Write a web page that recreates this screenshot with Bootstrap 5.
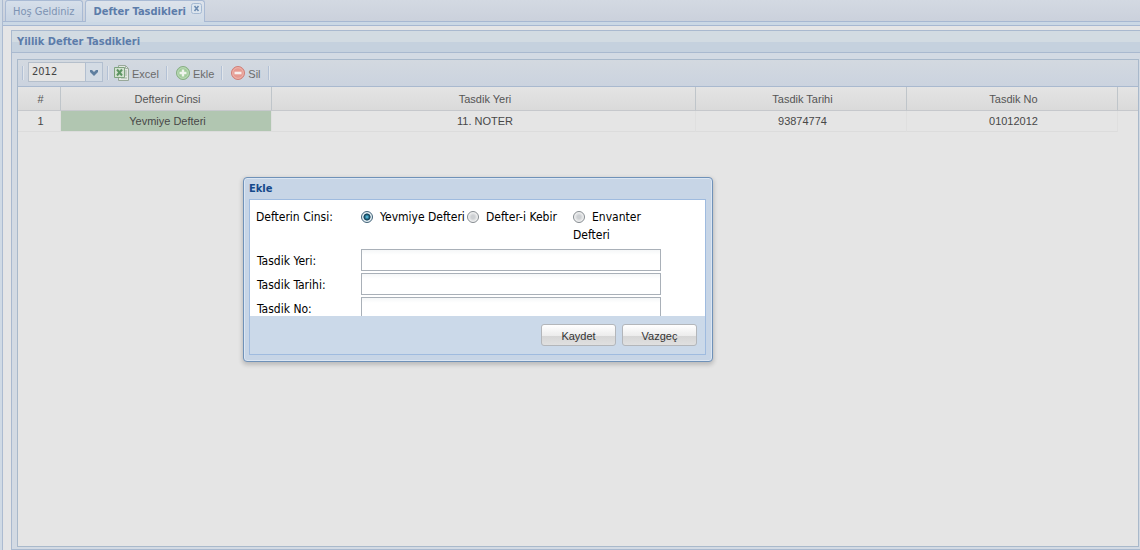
<!DOCTYPE html>
<html lang="tr">
<head>
<meta charset="utf-8">
<meta name="viewport" content="width=device-width, initial-scale=1">
<title>Defter Tasdikleri</title>
<link href="https://cdn.jsdelivr.net/npm/bootstrap@5.3.0/dist/css/bootstrap.min.css" rel="stylesheet">
<style>
  :root { --ui: "DejaVu Sans Condensed", "DejaVu Sans", sans-serif; --data: "Liberation Sans", Arial, sans-serif; }
  body { font: 11px/14px var(--ui); background: #d0dae5; color: #555; }
  .workspace { border-left: 1px solid #acbbd1; margin-left: 2px; }
  .tab-strip { height: 22px; padding-left: 2px; gap: 2px; background: linear-gradient(#d3d9e2, #cbd1dc); border-bottom: 1px solid #a7b8d2; }
  .tab-strip .nav-link { height: 21px; margin: 0; padding: 4px 7px; border: 1px solid #a9bad4; border-bottom: 0; border-radius: 3px 3px 0 0; color: #7d93b3; background: linear-gradient(#d6dfea, #c7d3e2); line-height: 14px; }
  .tab-strip .nav-link.active { height: 22px; color: #5c7caa; font-weight: bold; background: linear-gradient(#dde3eb, #cfdae6); padding: 4px 2px 4px 8px; }
  .tab-close { width: 11px; height: 11px; padding: 0; display: flex; margin: -2px 0 0 5px; }
  .tab-spacer { height: 4px; background: #cbd8e5; border-bottom: 1px solid #a7b8d2; }
  .stage { background: #e5e5e6; padding: 4px 0 0 8px; min-height: 0; }
  .books { border: 1px solid #a9b9cf; border-right: 0; background: #d3dae3; min-height: 0; }
  .books-title { height: 22px; padding: 4px 5px; font-weight: bold; font-size: 11px; color: #5c7caa; background: linear-gradient(#d2dbe2 0 50%, #c5d1de 52% 100%); border-bottom: 1px solid #a9b9cf; margin: 0; line-height: 14px; }
  .books-body { padding: 6px 1px 2px 5px; min-height: 0; }
  .grid-box { border: 1px solid #a9b9cb; background: #e5e5e5; min-height: 0; overflow: hidden; }
  .tools { height: 27px; padding: 0 4px; background: linear-gradient(#d3d9e0, #cbd3df); border-bottom: 1px solid #a9b9cf; font: 11px/14px var(--data); }
  .rule-v { width: 2px; height: 14px; border-left: 1px solid #b3c1d5; border-right: 1px solid #e1e5ea; }
  .tools .rule-gap { margin: 0 7px; }
  .tools button { border: 0; background: none; padding: 0; color: #6b6b6b; display: flex; align-items: center; gap: 2px; height: 20px; }
  .tools button span { padding-top: 2px; }
  .year { position: relative; width: 75px; height: 20px; margin-top: -2px; }
  .year select { appearance: none; width: 100%; height: 100%; border: 1px solid #b5bfcb; background: #e5e5e5; color: #444; font: 11px/14px var(--ui); padding: 0 4px 0 3px; border-radius: 0; }
  .year svg { position: absolute; right: 0; top: 0; pointer-events: none; }
  .ledger { width: 100%; table-layout: fixed; border-collapse: separate; border-spacing: 0; font: 11px/14px var(--data); color: #555; text-align: center; }
  .ledger th { font-weight: normal; height: 24px; padding: 0 0 0 3px; background: linear-gradient(#e4e4e4, #dadada); border-right: 1px solid #bfc5ca; border-bottom: 1px solid #c6c8cc; }
  .ledger th:last-child { border-right: 0; }
  .ledger td { height: 21px; padding: 0 0 0 3px; border-bottom: 1px solid #dcdcdc; border-right: 1px solid #dfdfdf; color: #484848; }
  .ledger td:last-child { border: 0; }
  .ledger .picked { background: #b1c6b1; }
  .dialog { position: absolute; left: 243px; top: 177px; width: 470px; padding: 0 6px 6px; border: 1px solid #6f91b8; border-radius: 4px; background: #c7d5e6; box-shadow: 0 2px 4px 1px rgba(0,0,0,.18), inset 0 0 0 1px #dbe6f3; color: #000; font-size: 12px; line-height: 18px; }
  .dialog h2 { font: bold 11px/14px var(--ui); height: 21px; margin: 0 -1px; padding: 4px 0 0; color: #15498b; }
  .dialog-in { border: 1px solid #9fbbdf; background: #cbd9e9; margin-left: -1px; }
  .fields { background: #fff; height: 116px; overflow: hidden; padding: 8px 6px 0; }
  .fields legend { font-size: 12px; line-height: 18px; width: 105px; margin: 0; float: none; }
  .kind { width: 106px; }
  .kind input { appearance: none; width: 12px; height: 12px; margin: 0 7px 0 0; vertical-align: -2px; border: 1px solid #858b90; border-radius: 50%; background: radial-gradient(#cdd0d3 0 25%, #f5f5f5 70%); }
  .kind input:checked { border-color: #3f6177; background: radial-gradient(circle, #51b5d6 0 8%, #14475f 38% 45%, #e5eef3 55%); }
  .line { height: 24px; padding-left: 1px; }
  .line label { width: 104px; padding-top: 1px; }
  .line input { width: 300px; height: 22px; border: 1px solid #a9b0b8; background: linear-gradient(#f5f7f8, #fff 5px); border-radius: 0; font: 12px var(--ui); padding: 1px 3px; }
  .actions { height: 38px; padding: 0 8px; gap: 6px; }
  .actions button { width: 75px; height: 22px; border: 1px solid #b3b6ba; border-radius: 3px; padding: 2px 0 0; color: #333; font: 11px/14px var(--data); background: linear-gradient(#fff, #ececec 54%, #d6d6d6 56%, #e0e0e0); }
</style>
</head>
<body class="vh-100 overflow-hidden">
<div class="workspace h-100 d-flex flex-column">
  <nav class="tab-strip nav flex-nowrap flex-shrink-0" aria-label="Sekmeler">
    <a class="nav-link" href="#welcome">Hoş Geldiniz</a>
    <a class="nav-link active d-flex" href="#books">Defter Tasdikleri
      <span class="tab-close" aria-hidden="true"><svg width="11" height="11" viewBox="0 0 11 11"><rect x=".5" y=".5" width="10" height="10" rx="2" fill="#dce5ee" stroke="#a4b9d2"/><path d="M3.500 3l4 5M7.500 3l-4 5" stroke="#6f8db2" stroke-width="1.600"/></svg></span>
    </a>
  </nav>
  <div class="tab-spacer flex-shrink-0"></div>
  <main class="stage flex-fill d-flex flex-column">
    <section class="books flex-fill d-flex flex-column">
      <h1 class="books-title flex-shrink-0">Yillik Defter Tasdikleri</h1>
      <div class="books-body flex-fill d-flex flex-column">
        <div class="grid-box flex-fill">
          <div class="tools d-flex align-items-center">
            <span class="rule-v me-1"></span>
            <div class="year me-1">
              <select aria-label="Yıl"><option>2012</option></select>
              <svg width="18" height="20" viewBox="0 0 18 20"><rect x=".5" y=".5" width="17" height="19" fill="#d3dbe4" stroke="#b2bfd0"/><path d="M5 8h2l2 2 2-2h2v2l-4 4-4-4z" fill="#5f7f9f"/></svg>
            </div>
            <span class="rule-v me-1"></span>
            <button type="button"><svg width="17" height="16" viewBox="0 0 17 16"><path d="M5.500.5h7l3 3v12h-10z" fill="#e3e8e3" stroke="#98a899"/><path d="M12.500.5v3h3M12 6h2M12 8h2M12 10h2M8 13h6" fill="none" stroke="#a3b1a4"/><path d="M1.500 2.500h10v10h-10z" fill="#d4e1d2" stroke="#7ea47f"/><path d="M4 4.500l5 6M9 4.500l-5 6" stroke="#5c9462" stroke-width="2"/></svg><span>Excel</span></button>
            <span class="rule-v rule-gap"></span>
            <button type="button"><svg width="16" height="16" viewBox="0 0 16 16"><circle cx="8" cy="8" r="6.500" fill="#a0cb9b" stroke="#87ae83"/><circle cx="8" cy="8" r="5.300" fill="none" stroke="#bddab9"/><path d="M8 4.500v7M4.500 8h7" stroke="#eef4ec" stroke-width="2.400"/></svg><span>Ekle</span></button>
            <span class="rule-v rule-gap"></span>
            <button type="button"><svg width="16" height="16" viewBox="0 0 16 16"><circle cx="8" cy="8" r="6.500" fill="#e59a91" stroke="#d07f78"/><circle cx="8" cy="8" r="5.300" fill="none" stroke="#efb4ab"/><path d="M4.500 8h7" stroke="#f7efed" stroke-width="2.600"/></svg><span>Sil</span></button>
            <span class="rule-v rule-gap"></span>
          </div>
          <table class="ledger">
            <colgroup><col style="width:43px"><col style="width:211px"><col><col style="width:211px"><col style="width:211px"><col style="width:20px"></colgroup>
            <thead><tr><th>#</th><th>Defterin Cinsi</th><th>Tasdik Yeri</th><th>Tasdik Tarihi</th><th>Tasdik No</th><th></th></tr></thead>
            <tbody><tr><td>1</td><td class="picked">Yevmiye Defteri</td><td>11. NOTER</td><td>93874774</td><td>01012012</td><td></td></tr></tbody>
          </table>
        </div>
      </div>
    </section>
  </main>
</div>

<form class="dialog" role="dialog" aria-labelledby="dlg-title">
  <h2 id="dlg-title">Ekle</h2>
  <div class="dialog-in">
    <div class="fields">
      <div class="d-flex mb-1" role="radiogroup" aria-labelledby="kind-label">
        <legend id="kind-label">Defterin Cinsi:</legend>
        <div class="kind text-nowrap"><input type="radio" name="kind" id="k1" checked><label for="k1">Yevmiye Defteri</label></div>
        <div class="kind text-nowrap"><input type="radio" name="kind" id="k2"><label for="k2">Defter-i Kebir</label></div>
        <div class="kind"><input type="radio" name="kind" id="k3"><label class="d-inline" for="k3">Envanter Defteri</label></div>
      </div>
      <div class="line d-flex align-items-center"><label for="place">Tasdik Yeri:</label><input type="text" id="place"></div>
      <div class="line d-flex align-items-center"><label for="date">Tasdik Tarihi:</label><input type="text" id="date"></div>
      <div class="line d-flex align-items-center"><label for="num">Tasdik No:</label><input type="text" id="num"></div>
    </div>
    <div class="actions d-flex justify-content-end align-items-center">
      <button type="submit">Kaydet</button>
      <button type="button">Vazgeç</button>
    </div>
  </div>
</form>
<script src="https://cdn.jsdelivr.net/npm/bootstrap@5.3.0/dist/js/bootstrap.bundle.min.js"></script>
</body>
</html>
